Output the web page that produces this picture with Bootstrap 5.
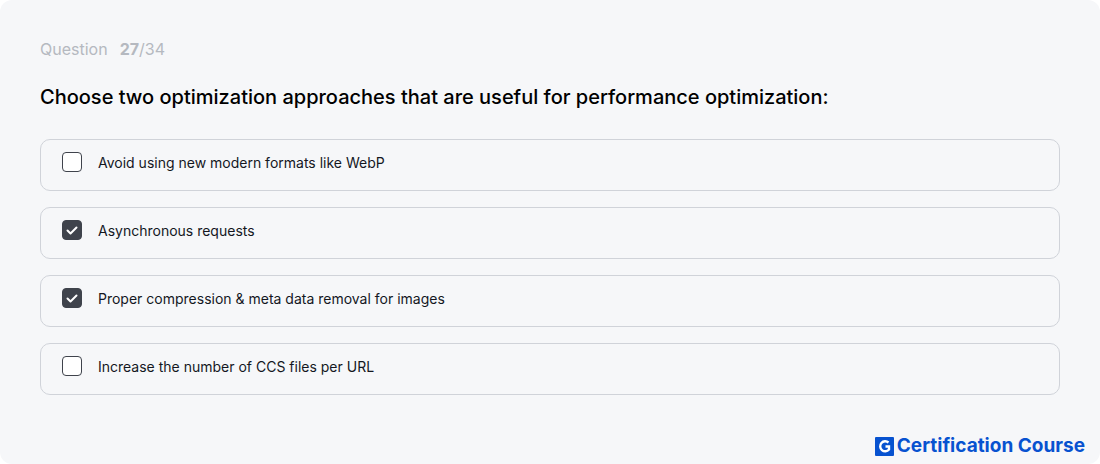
<!DOCTYPE html>
<html lang="en">
<head>
<meta charset="utf-8">
<meta name="viewport" content="width=device-width, initial-scale=1">
<title>Certification Course</title>
<link href="https://cdn.jsdelivr.net/npm/bootstrap@5.3.0/dist/css/bootstrap.min.css" rel="stylesheet">
<script src="https://cdn.jsdelivr.net/npm/bootstrap@5.3.0/dist/js/bootstrap.bundle.min.js" defer></script>
<style>
body { font-family: Inter, "Liberation Sans", sans-serif; background: #fff; }
.quiz { background: #f6f7f9; border-radius: 12px; padding: 39px 40px 6px; }
.counter { font-size: 16px; line-height: 20px; color: #b5b9c0; gap: 12px; }
.question { font-size: 20px; line-height: 28px; font-weight: 500; color: #000; margin: 24px 0 28px; }
.options { gap: 16px; }
.option { border: 1px solid #d0d3d9; border-radius: 10px; min-height: 52px; padding: 12px 21px; gap: 16px; font-size: 14px; line-height: 22px; color: #14171f; }
.option .form-check-input { width: 20px; height: 20px; border: 1px solid #3f434c; border-radius: 4px; background-color: #fff; }
.option .form-check-input:checked { background-color: #3f434c; background-image: url("data:image/svg+xml,%3Csvg xmlns='http://www.w3.org/2000/svg' viewBox='0 0 18 18'%3E%3Cpath d='M4.5 9.5l3 3 6-6' fill='none' stroke='%23fff' stroke-width='2' stroke-linecap='round' stroke-linejoin='round'/%3E%3C/svg%3E"); }
.brand { font-weight: 700; font-size: 19px; line-height: 24px; color: #0752d0; gap: 3px; margin: 39px -25px 0 0; }
</style>
</head>
<body>
<main class="quiz">
<p class="counter d-flex mb-0"><span>Question</span><span><b>27</b>/34</span></p>
<h1 class="question">Choose two optimization approaches that are useful for performance optimization:</h1>
<form class="options d-flex flex-column">
<label class="option d-flex"><input class="form-check-input m-0 flex-shrink-0" type="checkbox"><span>Avoid using new modern formats like WebP</span></label>
<label class="option d-flex"><input class="form-check-input m-0 flex-shrink-0" type="checkbox" checked><span>Asynchronous requests</span></label>
<label class="option d-flex"><input class="form-check-input m-0 flex-shrink-0" type="checkbox" checked><span>Proper compression &amp; meta data removal for images</span></label>
<label class="option d-flex"><input class="form-check-input m-0 flex-shrink-0" type="checkbox"><span>Increase the number of CCS files per URL</span></label>
</form>
<footer class="brand d-flex justify-content-end align-items-center"><svg width="19" height="19" viewBox="0 0 19 19" aria-hidden="true"><rect width="19" height="19" rx="1" fill="#0752d0"/><path d="M13.5 5.5A5 5 0 1 0 14 12.5V9.5H10.5" fill="none" stroke="#fff" stroke-width="2.4"/></svg><span>Certification Course</span></footer>
</main>
</body>
</html>
